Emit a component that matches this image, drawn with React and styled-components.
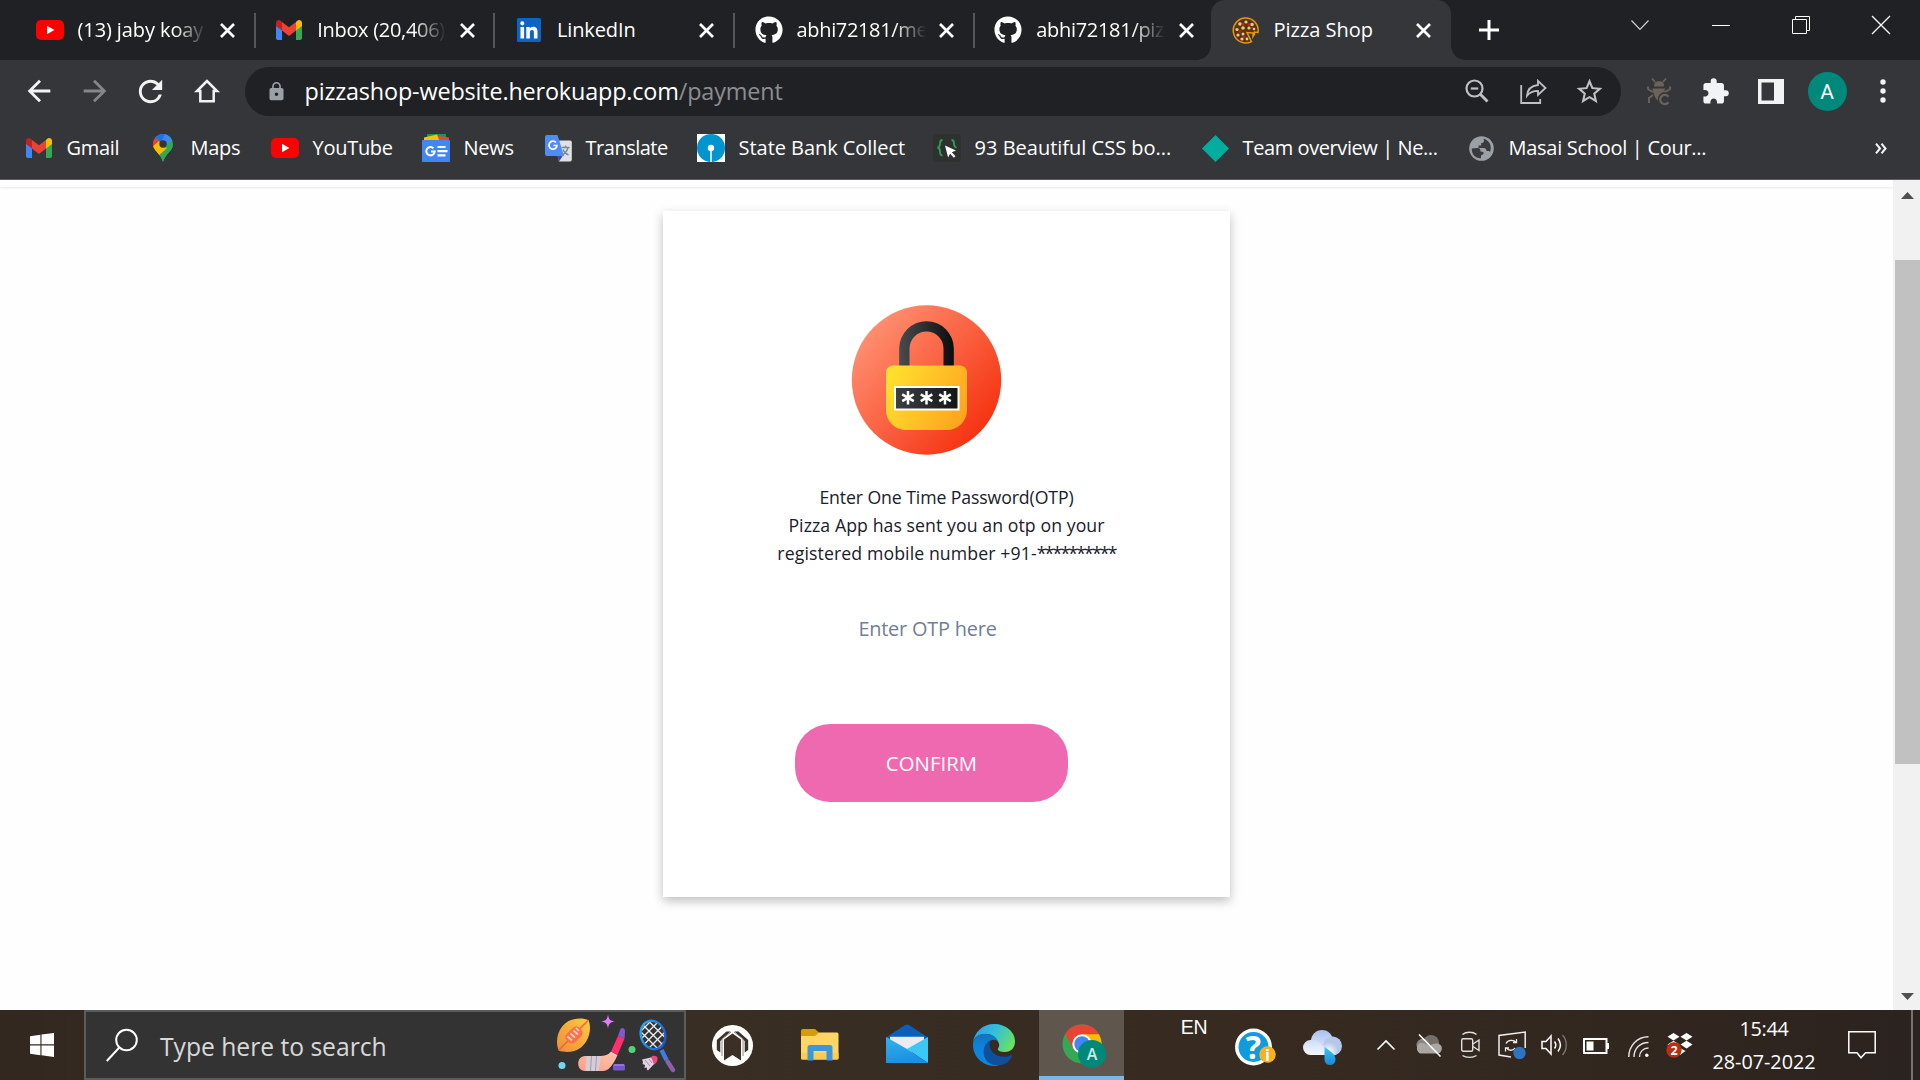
import React from "react";
import styled, { createGlobalStyle, css } from "styled-components";
import { FaGithub } from "react-icons/fa";
import { MdExtension, MdLock, MdStarBorder, MdArrowBack, MdArrowForward, MdRefresh } from "react-icons/md";

const Global = createGlobalStyle`
  *, *::before, *::after { box-sizing: border-box; }
  body { margin: 0; overflow: hidden; background: #fff; }
  svg { display: block; flex: none; overflow: visible; }
`;

const Screen = styled.div`
  width: 1920px;
  height: 1080px;
  display: flex;
  flex-direction: column;
  overflow: hidden;
  font-family: "Open Sans", "Noto Sans", sans-serif;
  color: #fff;
`;

/* ---------- Tab strip ---------- */
const TabStrip = styled.div`
  height: 60px;
  flex: none;
  display: flex;
  align-items: stretch;
  padding-left: 15px;
  background: #202124;
`;

const Tab = styled.div`
  position: relative;
  width: 239.7px;
  display: flex;
  align-items: center;
  padding-left: 20.5px;
  ${(p) =>
    p.$divider &&
    css`
      &::after {
        content: "";
        position: absolute;
        right: -1px;
        top: 13px;
        width: 2px;
        height: 35px;
        background: #54565a;
      }
    `}
  ${(p) =>
    p.$active &&
    css`
      width: 240px;
      margin-left: -2.5px;
      background: #35363a;
      border-radius: 14px 14px 0 0;
      &::before,
      &::after {
        content: "";
        position: absolute;
        bottom: 0;
        width: 14px;
        height: 14px;
      }
      &::before {
        left: -14px;
        background: radial-gradient(circle at 0 0, #202124 13.5px, #35363a 14px);
      }
      &::after {
        right: -14px;
        background: radial-gradient(circle at 100% 0, #202124 13.5px, #35363a 14px);
      }
    `}
`;

const TabIcon = styled.span`
  width: 28px;
  display: flex;
  justify-content: center;
`;

const TabTitle = styled.span`
  width: 129px;
  margin-left: 14px;
  font-size: 20px;
  line-height: 30px;
  letter-spacing: ${(p) => p.$track ?? -0.1}px;
  white-space: nowrap;
  overflow: hidden;
  ${(p) => p.$fade && css`mask-image: linear-gradient(90deg, #000 75%, transparent 100%);`}
`;

const TabClose = styled.button`
  margin-left: 14.5px;
  padding: 0;
  border: 0;
  background: none;
`;

const NewTab = styled.div`
  width: 76px;
  display: flex;
  align-items: center;
  justify-content: center;
`;

const WindowControls = styled.div`
  margin-left: auto;
  margin-right: -1px;
  height: 50px;
  display: flex;
`;

const Control = styled.div`
  width: 80.2px;
  display: flex;
  align-items: center;
  justify-content: center;
`;

/* ---------- Toolbar ---------- */
const Toolbar = styled.div`
  height: 63px;
  flex: none;
  display: flex;
  align-items: center;
  padding: 0 0 1px 10.5px;
  background: #35363a;
`;

const ToolCell = styled.div`
  width: 56px;
  height: 49px;
  display: flex;
  align-items: center;
  justify-content: center;
  flex: none;
  color: ${(p) => p.$color || "#f1f3f4"};
`;

const Omnibox = styled.div`
  width: 1376px;
  height: 49px;
  margin: 1px 10px 0 10.5px;
  padding: 0 4px 1px 21px;
  display: flex;
  align-items: center;
  border-radius: 25px;
  background: #202124;
  color: #9aa0a6;
`;

const Url = styled.div`
  flex: 1;
  margin-left: 17.5px;
  font-size: 23.4px;
  line-height: 34px;
  letter-spacing: -0.16px;
  color: #8b8d91;
  b {
    font-weight: 400;
    color: #fff;
  }
`;

const Avatar = styled.div`
  width: 39px;
  height: 39px;
  border-radius: 50%;
  background: #00897b;
  color: #fff;
  font: 21px/40px Roboto, sans-serif;
  text-align: center;
`;

const Bookmarks = styled.div`
  height: 57px;
  flex: none;
  display: flex;
  align-items: center;
  padding: 0 33px 6px 25px;
  background: #35363a;
  border-bottom: 1px solid #5f6063;
`;

const Bookmark = styled.div`
  width: ${(p) => p.$w}px;
  display: flex;
  align-items: center;
  gap: 13.6px;
  font-size: 20px;
  line-height: 30px;
  letter-spacing: ${(p) => p.$track ?? -0.3}px;
  white-space: nowrap;
`;

const BookmarkIcon = styled.span`
  width: 28px;
  height: 28px;
  flex: none;
  display: flex;
  align-items: center;
  justify-content: center;
`;

const Overflow = styled.div`
  margin-left: auto;
`;

/* ---------- Page ---------- */
const Viewport = styled.div`
  flex: 1;
  min-height: 0;
  display: flex;
  background: #fefefe;
`;

const Page = styled.main`
  flex: 1;
  display: flex;
  flex-direction: column;
  align-items: center;
`;

const HeaderEdge = styled.div`
  width: 100%;
  height: 7px;
  background: #fff;
  box-shadow: 0 1px 3px rgba(0, 0, 0, 0.09);
`;

const Card = styled.section`
  width: 567px;
  height: 686px;
  margin-top: 24px;
  padding-top: 94px;
  display: flex;
  flex-direction: column;
  background: #fff;
  box-shadow: 0 4px 10px rgba(0, 0, 0, 0.25);
`;

const LockPicture = styled.div`
  margin-left: 189px;
  height: 150px;
`;

const Message = styled.div`
  margin-top: 28px;
  display: flex;
  flex-direction: column;
  font-size: 17.7px;
  line-height: 28px;
  text-align: center;
  color: #1a202c;
`;

const Line = styled.span`
  letter-spacing: ${(p) => p.$track}px;
`;

const Masked = styled.span`
  letter-spacing: -1.85px;
`;

const OtpInput = styled.input`
  width: 266px;
  height: 50px;
  margin: 36px 0 0 131.5px;
  padding: 0;
  border: 0;
  background: transparent;
  font: 400 19.9px "Open Sans", "Noto Sans", sans-serif;
  letter-spacing: -0.2px;
  text-align: center;
  &::placeholder {
    color: #718096;
    opacity: 1;
  }
`;

const ConfirmButton = styled.button`
  width: 273px;
  height: 78px;
  margin: 71px 0 0 132px;
  padding: 0;
  border: 0;
  border-radius: 35px;
  background: #ef69b0;
  color: #fff;
  font: 400 20.3px "Open Sans", "Noto Sans", sans-serif;
  letter-spacing: 0.1px;
`;

const Scrollbar = styled.div`
  width: 27px;
  display: flex;
  flex-direction: column;
  align-items: center;
  padding: 12px 0 10px 1px;
  background: #f1f1f1;
`;

const Thumb = styled.div`
  width: 25px;
  height: 504px;
  margin: 61px 0 auto 1px;
  background: #c1c1c1;
`;

/* ---------- Taskbar ---------- */
const Taskbar = styled.footer`
  height: 70px;
  flex: none;
  display: flex;
  background: linear-gradient(90deg, #33281f, #392e23 35%, #372b21 62%, #32271f 85%, #2b2320);
`;

const StartButton = styled.div`
  width: 84px;
  display: flex;
  align-items: center;
  justify-content: center;
`;

const SearchBox = styled.div`
  width: 602px;
  display: flex;
  align-items: center;
  padding-left: 20px;
  border: 2px solid #5b5b5b;
  background: #333;
`;

const SearchText = styled.span`
  flex: 1;
  margin: 3px 0 0 22px;
  font-size: 24.7px;
  line-height: 34px;
  letter-spacing: -0.03px;
  color: #d8d8d8;
`;

const AppTile = styled.div`
  width: 87px;
  display: flex;
  align-items: center;
  justify-content: center;
  ${(p) => p.$first && css`margin-left: 3px;`}
  ${(p) =>
    p.$active &&
    css`
      width: 85px;
      margin-left: 2px;
      padding: 6px 0 0 4px;
      background: #5f574e;
      border-bottom: 4px solid #76b9ed;
    `}
`;

const TrayCell = styled.div`
  width: ${(p) => p.$w || 42}px;
  margin-left: ${(p) => p.$ml || 0}px;
  padding-top: ${(p) => p.$drop || 0}px;
  display: flex;
  align-items: center;
  justify-content: center;
`;

const Language = styled.div`
  width: 60px;
  margin-left: 40px;
  padding-top: 6px;
  font: 19.5px/22px "Liberation Sans", Arial, sans-serif;
  letter-spacing: -0.4px;
  text-align: center;
`;

const Clock = styled.div`
  width: 126px;
  display: flex;
  flex-direction: column;
  padding-top: 2px;
  font-size: 19.8px;
  line-height: 33px;
  text-align: center;
`;

const ClockLine = styled.span`
  letter-spacing: ${(p) => p.$track}px;
`;

const ShowDesktop = styled.div`
  width: 2px;
  margin-left: 14px;
  background: #77726d;
`;

/* ---------- Drawings ---------- */
const YouTube = () => (
  <svg width="28" height="20" viewBox="0 0 28 20">
    <rect width="28" height="20" rx="5" fill="#f00" />
    <path d="M11 5.8v8.4L18.4 10z" fill="#fff" />
  </svg>
);

const GmailMark = () => (
  <svg width="26" height="20" viewBox="0 0 26 20">
    <path d="M0 4v14.2A1.8 1.8 0 0 0 1.8 20H6V8.5z" fill="#4285f4" />
    <path d="M26 4v14.2a1.8 1.8 0 0 1-1.8 1.8H20V8.5z" fill="#34a853" />
    <path d="M6 2v8.6l7 5.3 7-5.3V2l-7 5.3z" fill="#ea4335" />
    <path d="M20 2v8.6l6-4.5V3c0-2.6-2.9-3.9-4.8-2.3z" fill="#fbbc04" />
    <path d="M0 6.1l6 4.5V2L4.8.8C2.9-.9 0 .4 0 3z" fill="#c5221f" />
  </svg>
);

const LinkedIn = () => (
  <svg width="24" height="24" viewBox="0 0 24 24">
    <rect width="24" height="24" rx="1.6" fill="#0a66c2" />
    <path d="M3.5 9h3.6v11.4H3.5zM5.3 3.3a2.05 2.05 0 1 1 0 4.1 2.05 2.05 0 0 1 0-4.1zM9.3 9h3.4v1.6c.5-1 1.7-1.9 3.5-1.9 3.6 0 4.3 2.4 4.3 5.5v6.2h-3.6v-5.5c0-1.3 0-3-1.8-3s-2.2 1.4-2.2 2.9v5.6H9.3z" fill="#fff" />
  </svg>
);

const Pizza = () => (
  <svg width="27" height="27" viewBox="0 0 27 27">
    <path d="M13.5 1A12.5 12.5 0 1 0 19.500 24.600L15 15.500l6 .5v3.500l1.500-2.500v-2l3.500.5A12.500 12.500 0 0 0 13.500 1z" fill="#5a3412" stroke="#e8960c" strokeWidth="1.500" />
    <g fill="#e6cf7c">
      <circle cx="8" cy="7" r="1.800" /><circle cx="14" cy="5" r="1.600" /><circle cx="20" cy="7.500" r="1.800" />
      <circle cx="5" cy="12.500" r="1.600" /><circle cx="11" cy="11" r="1.800" /><circle cx="17" cy="11" r="1.600" />
      <circle cx="22" cy="12" r="1.300" /><circle cx="6" cy="18" r="1.600" /><circle cx="11" cy="17" r="1.500" />
      <circle cx="10" cy="22" r="1.600" /><circle cx="15" cy="22" r="1.400" />
    </g>
    <g fill="#b5242c">
      <circle cx="11" cy="7.500" r="1.500" /><circle cx="17" cy="7.500" r="1.500" /><circle cx="8" cy="14.500" r="1.500" />
      <circle cx="12.500" cy="20" r="1.500" /><circle cx="20" cy="10.500" r="1.100" />
    </g>
  </svg>
);

const Cross = ({ size = 13, w = 2.7 }) => (
  <svg width={size} height={size} viewBox={`0 0 ${size} ${size}`}>
    <path d={`M0 0L${size} ${size}M${size} 0L0 ${size}`} stroke="#fff" strokeWidth={w} />
  </svg>
);

const House = () => (
  <svg width="24" height="24" viewBox="0 0 24 24">
    <path d="M12 2L2 12h3.300v10.300h13.400V12H22z" fill="none" stroke="#f1f3f4" strokeWidth="2.500" />
  </svg>
);

const ZoomOut = () => (
  <svg width="24" height="24" viewBox="0 0 24 24" fill="none" stroke="#bdc1c6" strokeWidth="2.200">
    <circle cx="9.500" cy="9.500" r="8" />
    <path d="M5.800 9.500h7.400" />
    <path d="M15.300 15.300l7.200 7.200" strokeWidth="2.900" />
  </svg>
);

const Share = () => (
  <svg width="27" height="25" viewBox="0 0 27 25" fill="none" stroke="#bdc1c6" strokeWidth="1.800">
    <path d="M1.200 6v18h19v-4" />
    <path d="M18 1.800l7.500 7.200L18 16v-4.200c-5.500 0-8.500 1.700-11 5C7.400 11 11 6.800 18 6z" />
  </svg>
);

const Bug = () => (
  <svg width="24" height="27" viewBox="0 0 24 27" fill="none" stroke="#6b625b" strokeWidth="1.900">
    <path d="M5 .500l3 3.500M19 .500L16 4M1 8.500v2.500l4 2.500h14l4-2.500V8.500M2 25v-5l4-3" />
    <path d="M8 7.500c0-4.500 8-4.500 8 0z" fill="#6b625b" />
    <path d="M5.500 10.500h13l-3.500 4.500-3.500 8c-3-2-4.500-5-6-12.500z" fill="#6b625b" stroke="none" />
    <path d="M21.500 18.500a4.700 4.700 0 1 0 0 5.500" stroke="#35363a" strokeWidth="4.500" />
    <path d="M21.500 18.700a4.600 4.600 0 1 0 0 5.500" strokeWidth="2.300" />
  </svg>
);

const SidePanel = () => (
  <svg width="26" height="25" viewBox="0 0 26 25">
    <path d="M0 0h26v25H0zM3.500 3.500v18H16v-18z" fill="#f1f3f4" fillRule="evenodd" />
  </svg>
);

const Dots = () => (
  <svg width="6" height="24" viewBox="0 0 6 24" fill="#f1f3f4">
    <circle cx="3" cy="3" r="2.700" /><circle cx="3" cy="12" r="2.700" /><circle cx="3" cy="21" r="2.700" />
  </svg>
);

const MapsPin = () => (
  <svg width="20" height="28" viewBox="0 0 20 28">
    <clipPath id="pin"><path d="M10 0A10 10 0 0 0 0 10c0 7 7.500 9 10 18 2.500-9 10-11 10-18A10 10 0 0 0 10 0z" /></clipPath>
    <g clipPath="url(#pin)">
      <rect width="20" height="28" fill="#34a853" />
      <path d="M0 16L16 0H0z" fill="#1a73e8" />
      <path d="M7 0h13v5L10 14z" fill="#4285f4" />
      <path d="M0 0h4l4 7-8 8z" fill="#ea4335" />
      <path d="M3 0h9L8 8 2.500 4z" fill="#1a73e8" />
      <path d="M-1 13l7-6 4 6 4 1L3 24z" fill="#fbbc04" />
      <path d="M20 4v8L5 28h15z" fill="#34a853" />
    </g>
    <circle cx="10" cy="10" r="3.700" fill="#35363a" />
  </svg>
);

const News = () => (
  <svg width="28" height="28" viewBox="0 0 28 28">
    <path d="M5 0h19v8H5z" fill="#0c9d58" />
    <path d="M15 1.500l12 2V8H14z" fill="#ea4335" />
    <path d="M2 3.500L15 .500 18 8H2z" fill="#ffc107" />
    <rect y="6" width="28" height="22" rx="1" fill="#4285f4" />
    <path d="M11.500 14.200a4.200 4.200 0 1 0 1.200 3.300H9" fill="none" stroke="#fff" strokeWidth="2" />
    <path d="M15.500 13h8M15.500 17.200h10M15.500 21.400h8" stroke="#fff" strokeWidth="2.200" />
  </svg>
);

const Translate = () => (
  <svg width="27" height="27" viewBox="0 0 27 27">
    <path d="M9 5.500h16a1.800 1.800 0 0 1 1.800 1.800v17.500a1.800 1.800 0 0 1-1.800 1.800H14z" fill="#dfe1e5" />
    <path d="M12 20.500h6l-4 6z" fill="#3949ab" />
    <path d="M2 0h10.500L19 21H2a2 2 0 0 1-2-2V2a2 2 0 0 1 2-2z" fill="#4e8df5" />
    <path d="M11 7.500A4 4 0 1 0 12 10.500H8.500" fill="none" stroke="#fff" strokeWidth="1.700" />
    <path d="M16.500 12.500h8M20.500 10.500v2M23 12.500c-.6 3-3 6-6 7.500M18 14.500c1 2.500 3 4.500 5.500 5.500" fill="none" stroke="#7c8a96" strokeWidth="1.400" />
  </svg>
);

const StateBank = () => (
  <svg width="28" height="28" viewBox="0 0 28 28">
    <rect width="28" height="28" fill="#fff" />
    <circle cx="14" cy="14" r="14" fill="#0095d0" />
    <circle cx="14" cy="14" r="3.200" fill="#fff" />
    <path d="M14 14v14" stroke="#fff" strokeWidth="1.500" />
  </svg>
);

const CssBraces = () => (
  <svg width="28" height="28" viewBox="0 0 28 28">
    <rect width="28" height="28" rx="4" fill="#2f3030" />
    <path d="M9.500 6C7 6 7 7.500 7 9.500s0 3.500-2.500 4c2.500.500 2.500 2 2.500 4s0 4 2.500 4M18.500 6c2.500 0 2.500 1.500 2.500 3.500s0 3.500 2.500 4" fill="none" stroke="#2f9e58" strokeWidth="1.800" />
    <path d="M12 11.500l11 5-4.200 1.700 3.700 4-1.700 1.600-3.700-4-2 3.700z" fill="#fff" />
  </svg>
);

const Diamond = () => (
  <svg width="27" height="27" viewBox="0 0 27 27">
    <path d="M13.500 0L27 13.500 13.500 27 0 13.500z" fill="#00ad9f" />
  </svg>
);

const Globe = () => (
  <svg width="25" height="25" viewBox="0 0 25 25">
    <circle cx="12.500" cy="12.500" r="12.300" fill="#9aa0a6" />
    <path d="M2.800 12.500l5.200-.500c3 0 3.500 1.500 3.500 3.500l3 .500v2l-2.500 1.500v2.800C6 22.500 2.500 18 2.800 12.500zM14.500 2.800L15 4.500c0 2-1 2.500-2.800 2.500v2.500H9.500v2.500h5c2.500 0 3 1.500 3 3h2.500l1 1c2-4.500.500-11.500-6.500-13.200z" fill="#3a3b3f" />
  </svg>
);

const Chevrons = () => (
  <svg width="12" height="11" viewBox="0 0 12 11" fill="none" stroke="#f1f3f4" strokeWidth="2.100">
    <path d="M1 .700l4 4.800-4 4.800M6.500.700l4 4.800-4 4.800" />
  </svg>
);

const Star = ({ x, y }) => (
  <path transform={`translate(${x} ${y})`} d="M0-6.800V6.800M-5.800-3.400L5.800 3.400M-5.800 3.400L5.800-3.400" stroke="#fff" strokeWidth="2.500" />
);

const OtpLock = () => (
  <svg width="150" height="150" viewBox="0 0 150 150">
    <defs>
      <linearGradient id="disc" x1="0.100" y1="0.150" x2="0.900" y2="0.850">
        <stop offset="0" stopColor="#ff9072" /><stop offset="1" stopColor="#f5310f" />
      </linearGradient>
      <linearGradient id="shackle"><stop offset="0" stopColor="#4a4b4d" /><stop offset="1" stopColor="#0c0d0f" /></linearGradient>
      <linearGradient id="body" x1="0" y1="0.300" x2="1" y2="0.700"><stop offset="0" stopColor="#ffdf2e" /><stop offset="1" stopColor="#fea41f" /></linearGradient>
      <linearGradient id="panel"><stop offset="0" stopColor="#3d3f42" /><stop offset="1" stopColor="#121416" /></linearGradient>
    </defs>
    <circle cx="74.500" cy="75" r="74.700" fill="url(#disc)" />
    <path d="M47.200 64V43.500a27.300 27.300 0 0 1 54.600 0V64H91.500V43.500a17 17 0 0 0-34 0V64z" fill="url(#shackle)" />
    <path d="M41 60.500h67a7 7 0 0 1 7 7v37.500a20 20 0 0 1-20 20H54a20 20 0 0 1-20-20V67.500a7 7 0 0 1 7-7z" fill="url(#body)" />
    <rect x="43" y="82" width="63.500" height="22.500" fill="url(#panel)" stroke="#fff" strokeWidth="2" />
    <Star x={56} y={92.800} /><Star x={74.500} y={92.800} /><Star x={93} y={92.800} />
  </svg>
);

const WindowsLogo = () => (
  <svg width="24" height="24" viewBox="0 0 24 24" fill="#fff">
    <path d="M0 3.300l10.400-1.500v9.500H0zM11.500 1.600L24 0v11.300H11.500zM0 12.400h10.400v9.800L0 20.700zM11.500 12.400H24V24l-12.500-1.700z" />
  </svg>
);

const Magnifier = () => (
  <svg width="32" height="34" viewBox="0 0 32 34" fill="none" stroke="#fff" strokeWidth="2">
    <circle cx="20.500" cy="12" r="10.300" />
    <path d="M13.300 19.500L.800 33" />
  </svg>
);

const Sports = () => (
  <svg width="128" height="66" viewBox="556 1012 128 66">
    <defs>
      <linearGradient id="ball" x1="0" y1="1" x2="1" y2="0"><stop offset="0" stopColor="#ef8b3a" /><stop offset=".7" stopColor="#fbb83c" /><stop offset="1" stopColor="#ffd23f" /></linearGradient>
      <linearGradient id="racket" x1="0" y1="0" x2="1" y2="1"><stop offset="0" stopColor="#2fb5f5" /><stop offset="1" stopColor="#1d48c4" /></linearGradient>
      <linearGradient id="stick" x1="0" y1="1" x2="1" y2="0"><stop offset="0" stopColor="#ff9e86" /><stop offset="1" stopColor="#ffc4ae" /></linearGradient>
      <clipPath id="strings"><ellipse cx="653" cy="1035" rx="12.500" ry="14" transform="rotate(-20 653 1035)" /></clipPath>
    </defs>
    <path d="M558.500 1050.500C554.500 1039 558.500 1027 568.500 1021c6-3 14-3.500 20-1 3.500 9 .500 21-7.500 27.500-6.500 5-15.500 5.500-22.500 3z" fill="url(#ball)" />
    <path d="M559 1050l29-29.500" stroke="#f0673f" strokeWidth="1.700" />
    <rect x="565" y="1029" width="18" height="12" rx="5" fill="#ff7043" transform="rotate(-44 574 1035)" />
    <path d="M567.500 1036.500l4.500 4M570.500 1033.500l4.500 4M573.500 1030.500l4.500 4M576 1028l3 3" stroke="#ffd2c4" strokeWidth="1.700" />
    <path d="M608 1014.500c.800 5 2 6.200 7 7-5 .800-6.200 2-7 7-.800-5-2-6.200-7-7 5-.800 6.200-2 7-7z" fill="#e07bff" />
    <path d="M611 1051.500l6.500 3.500c-2 5-5 10.500-9 14-2 1.500-4 2-7 2H585c-9 0-9-15 0-15h14c6 0 9-1 12-4.500z" fill="url(#stick)" />
    <path d="M586.500 1056h14.500l-2.500 15h-13z" fill="#d5cdd8" /><path d="M591.500 1056l-1 15M596.500 1056l-1 15" stroke="#a898a8" />
    <path d="M611 1051.500l6.500 3.500 7-16.500-6.500-2.500z" fill="#ff2f6d" />
    <path d="M618 1036l6.500 2.500 .500-6.500c.300-5-4-5-5-2z" fill="#8557cf" />
    <circle cx="632" cy="1049.600" r="3.500" fill="#4fd477" /><circle cx="562" cy="1065.400" r="3.500" fill="#6fd9ef" />
    <rect x="613" y="1064" width="12" height="6.500" rx="1.500" fill="#7657c9" /><path d="M614 1065h10" stroke="#9a7ce6" strokeWidth="1.600" />
    <g clipPath="url(#strings)" stroke="#e8eaf2" strokeWidth="1.300">
      <path d="M634 1025l30 30M639 1021l30 30M644.500 1017l30 30M629 1029l30 30M636 1036l24-24M638 1042l26-26M641.500 1047l26-26M645 1052l26-26M650 1056l22-22" />
    </g>
    <ellipse cx="653" cy="1035" rx="12" ry="14.500" transform="rotate(-20 653 1035)" fill="none" stroke="url(#racket)" strokeWidth="2.400" />
    <path d="M661.500 1050l5 10" stroke="#3f7ee0" strokeWidth="4.500" /><path d="M667.500 1061.500l5.500 8.500" stroke="#8a5fae" strokeWidth="4.500" strokeLinecap="round" />
    <path d="M642 1059.500l11-2.500 3 5-8 8.500c-1-1-1.500-1-1-3l-2.500.500.500-3-2.500-1 .500-2z" fill="#e2d3e4" /><path d="M645 1060l5 6M649 1059l3 4" stroke="#a98eae" />
    <path d="M651 1057c2-2 6-1.500 6.500 1 .300 3-1 5.500-3.500 6.500z" fill="#f0477c" />
  </svg>
);

const RoundMark = () => (
  <svg width="41" height="41" viewBox="0 0 41 41">
    <circle cx="20.500" cy="20.500" r="20.500" fill="#fff" />
    <g fill="#3a3026">
      <path d="M4.800 15L14.500 6.500h4L8.300 16v11.500L4.800 25z" />
      <path d="M36.200 15L26.500 6.500h-4L32.700 16v11.500L36.200 25z" />
      <path d="M12 35.500V14.500L20.500 8.500 29 14.500v21L20.500 30z" />
    </g>
    <path d="M10 31V13.800L19 7M31 31V13.800L22 7" fill="none" stroke="#8d8680" strokeWidth="1" />
  </svg>
);

const Folder = () => (
  <svg width="38" height="33" viewBox="0 0 38 33">
    <path d="M0 2a2 2 0 0 1 2-2h12l4 3.500V8H0z" fill="#d99a06" />
    <path d="M0 7h14l4-3.500h18a1.500 1.500 0 0 1 1.500 1.500V29a1.500 1.500 0 0 1-1.500 1.500H1.500A1.500 1.500 0 0 1 0 29z" fill="#ffd666" />
    <path d="M0 24h37.500v5a1.500 1.500 0 0 1-1.500 1.500H1.500A1.500 1.500 0 0 1 0 29z" fill="#fbcc4e" />
    <path d="M6.500 31.500V18.500a2.500 2.500 0 0 1 2.500-2.500h20a2.500 2.500 0 0 1 2.500 2.500v13H25.500V22h-13v9.500z" fill="#3a96dd" />
  </svg>
);

const Mail = () => (
  <svg width="42" height="42" viewBox="0 0 42 42">
    <defs>
      <linearGradient id="m1" x1="0" y1="0" x2="0.300" y2="1"><stop offset="0" stopColor="#2fb4f0" /><stop offset="1" stopColor="#1d8fe0" /></linearGradient>
    </defs>
    <path d="M0 13.500L19 1a4 4 0 0 1 4 0L42 13.500v4H0z" fill="#0a5fb8" />
    <path d="M4 12.700h34V20L21 32 4 20z" fill="#ececf0" />
    <path d="M42 13L21 25l21 14z" fill="#3cc8f5" />
    <path d="M0 13l21 12 21 14H0z" fill="url(#m1)" />
  </svg>
);

const Edge = () => (
  <svg width="42" height="42" viewBox="0 0 42 42">
    <defs>
      <linearGradient id="e1" x1="0" y1="0.200" x2="1" y2="0.600"><stop offset="0" stopColor="#2f9cf0" /><stop offset=".5" stopColor="#34c1d6" /><stop offset="1" stopColor="#6be15d" /></linearGradient>
      <linearGradient id="e2" x1="0.300" y1="0" x2="0.300" y2="1"><stop offset="0" stopColor="#1273b8" /><stop offset=".4" stopColor="#0b83dc" /><stop offset="1" stopColor="#1087df" /></linearGradient>
    </defs>
    <path d="M0 19C1 8 10 0 21 0c12 0 21 8 21 17 0 7-4 11-10 11-4.500 0-8-1.500-7-3.500 1.500-2 1.500-4 .500-6C23 13 18 10 12.500 10 6 10 1 13 0 19z" fill="url(#e1)" />
    <path d="M0 21c0-7 5-11.300 12.500-11.300 6 0 11.500 3.300 13 8.300-3-3.500-9-3-10.500 2-1.500 9 2 18 11 21.500C12 44 0 34 0 21z" fill="url(#e2)" />
    <path d="M17.500 16.500c-9 3.500-9 18-.500 23 9 4.500 18 .500 22-7 .500-1.300-.500-1.700-1.700-1-5 2.500-13 1.500-17.300-3-3-3-4.500-8-2.500-12z" fill="#0e4f9e" />
  </svg>
);

const ChromeProfile = () => (
  <svg width="44" height="44" viewBox="0 0 44 44">
    <circle cx="20" cy="20" r="19.500" fill="#34a853" />
    <path d="M20 20L3.100 10.250A19.500 19.500 0 0 1 36.900 10.250z" fill="#ea4335" />
    <path d="M20 10.250h16.900A19.500 19.500 0 0 1 20 39.500l8.400-14.700z" fill="#fbbc04" />
    <path d="M3.100 10.250L11.600 25 20 10.250z" fill="#ea4335" />
    <circle cx="20" cy="20" r="9.700" fill="#fff" /><circle cx="20" cy="20" r="7.700" fill="#4285f4" />
    <circle cx="30" cy="30" r="14" fill="#00897b" />
    <text x="30" y="36" fontSize="16" fontWeight="600" textAnchor="middle" fill="#c9ebe5">A</text>
  </svg>
);

const Help = () => (
  <svg width="41" height="38" viewBox="0 0 41 38">
    <circle cx="18.500" cy="19" r="18.500" fill="#fff" /><circle cx="18.500" cy="19" r="15" fill="#0f9be0" />
    <text x="18.500" y="30.500" fontSize="32" fontWeight="700" textAnchor="middle" fill="#fff">?</text>
    <circle cx="32.500" cy="26.500" r="8.300" fill="#f6b21b" />
    <text x="32.500" y="32.500" fontSize="16" fontWeight="700" textAnchor="middle" fill="#fff">i</text>
  </svg>
);

const Weather = () => (
  <svg width="40" height="35" viewBox="0 0 40 35">
    <defs>
      <linearGradient id="c1" x1="0" y1="0" x2="0" y2="1"><stop offset="0" stopColor="#a9c1f0" /><stop offset="1" stopColor="#e3ebfb" /></linearGradient>
      <radialGradient id="c2" cx=".3" cy=".8"><stop offset="0" stopColor="#fff" /><stop offset="1" stopColor="#b5c8ea" /></radialGradient>
      <linearGradient id="c3" x1="0" y1="0" x2="0" y2="1"><stop offset="0" stopColor="#cfdcf7" /><stop offset="1" stopColor="#f4f7fe" /></linearGradient>
      <linearGradient id="drop" x1="0" y1="0" x2="0" y2="1"><stop offset="0" stopColor="#3fc5f2" /><stop offset="1" stopColor="#158ad8" /></linearGradient>
    </defs>
    <circle cx="19" cy="11" r="11" fill="url(#c1)" />
    <circle cx="29.500" cy="16" r="9.500" fill="url(#c2)" />
    <path d="M7.500 10a7.500 7.500 0 0 0 0 15H24l-3-9c-2 1-4-4-7-5a10 10 0 0 0-6.500-1z" fill="url(#c3)" />
    <path d="M21.500 17c6 4 11 8 11 12.500a5.500 5.500 0 0 1-11 0z" fill="url(#drop)" />
  </svg>
);

const CloudOff = () => (
  <svg width="28" height="24" viewBox="0 0 28 24">
    <circle cx="17" cy="9" r="8" fill="#756f69" /><circle cx="9" cy="11" r="6.500" fill="#8a857f" />
    <path d="M6 9a6 6 0 0 0 0 10.500h17a5 5 0 0 0 2-9.500c-3-1-7 0-10 2-2-2-6-3.500-9-3z" fill="#aaa6a1" />
    <path d="M5 .500l21.500 22" stroke="#fff" strokeWidth="1.600" />
  </svg>
);

const MeetCam = () => (
  <svg width="19" height="26" viewBox="0 0 19 26" fill="none" stroke="#e2e0de" strokeWidth="1.400">
    <rect x=".700" y="6.700" width="11" height="12.500" rx="1.500" />
    <path d="M12 12l6-4v10.500l-6-4M1.500 2.500C5-.500 12-.500 15.500 2.500M1.500 23.500c3.500 2.500 10.500 2.500 14 0" />
  </svg>
);

const SyncIcon = () => (
  <svg width="28" height="28" viewBox="0 0 28 28" fill="none" stroke="#eee" strokeWidth="1.500">
    <path d="M13 26L1 24V4.500L27.200 1v16" />
    <path d="M8 12.500c2-4 8-4 10-1M18.500 8v3.500H15M17 17c-2 3-6.500 3-8.500 0M7.500 20.500V17H11" strokeWidth="1.300" />
    <circle cx="21.500" cy="22" r="6.200" fill="#2f74c0" stroke="none" />
  </svg>
);

const Speaker = () => (
  <svg width="27" height="22" viewBox="0 0 27 22" fill="none" stroke="#fff" strokeWidth="1.500">
    <path d="M1 7.500h4L10 2v18l-5-5.500H1zM13.500 7.500c1.500 2 1.500 5 0 7M17 4.500c3 4 3 9 0 13" />
    <path d="M21.500 1c5 5.500 5 14.500 0 20" stroke="#77716c" />
  </svg>
);

const Battery = () => (
  <svg width="26" height="16" viewBox="0 0 26 16">
    <path d="M1 1h22.500v14H1z" fill="none" stroke="#fff" strokeWidth="2" />
    <path d="M24 5h2v6h-2zM3.500 3.500h7v9h-7z" fill="#fff" />
  </svg>
);

const Wifi = () => (
  <svg width="21" height="21" viewBox="0 0 21 21" fill="none" stroke="#e6e4e2" strokeWidth="1.400">
    <path d="M.800 21C.800 10 9 .800 20.500.800M6 21C6 12.500 12 6.500 20.500 6.500M11.500 21c0-5 3.500-9 9-9" />
    <circle cx="18.800" cy="19.300" r="1.700" fill="#fff" stroke="none" />
  </svg>
);

const Dropbox = () => (
  <svg width="26" height="26" viewBox="0 0 26 26">
    <path d="M6.500 1l6 3.800-6 3.800-6-3.800zM19.500 1l6 3.800-6 3.800-6-3.800zM19.500 8.800l6 3.800-6 3.800-6-3.800zM6.500 8.800l6 3.800-6 3.800-6-3.800zM13 16l5.500 3-5.500 4z" fill="#fff" />
    <circle cx="7" cy="18" r="7.700" fill="#b92f14" />
    <text x="7" y="22.500" fontSize="12.500" fontWeight="700" textAnchor="middle" fill="#fff">2</text>
  </svg>
);

const Notification = () => (
  <svg width="28" height="28" viewBox="0 0 28 28" fill="none" stroke="#fff" strokeWidth="1.500">
    <path d="M.800.800h26.400v21H17.500l-4.500 5-4-5H.800z" />
  </svg>
);

const tabs = [
  { title: "(13) jaby koay", icon: <YouTube />, fade: true, divider: true },
  { title: "Inbox (20,406)", icon: <GmailMark />, fade: true, divider: true, track: -0.3 },
  { title: "LinkedIn", icon: <LinkedIn />, divider: true },
  { title: "abhi72181/me", icon: <FaGithub size={28} />, fade: true, divider: true, track: -0.35 },
  { title: "abhi72181/piz", icon: <FaGithub size={28} />, fade: true, track: -0.3 },
  { title: "Pizza Shop", icon: <Pizza />, active: true, track: 0 },
];

const bookmarks = [
  { name: "Gmail", icon: <GmailMark />, w: 124 },
  { name: "Maps", icon: <MapsPin />, w: 122 },
  { name: "YouTube", icon: <YouTube />, w: 151 },
  { name: "News", icon: <News />, w: 122 },
  { name: "Translate", icon: <Translate />, w: 153, track: -0.5 },
  { name: "State Bank Collect", icon: <StateBank />, w: 236, track: -0.05 },
  { name: "93 Beautiful CSS bo...", icon: <CssBraces />, w: 268, track: 0 },
  { name: "Team overview | Ne...", icon: <Diamond />, w: 266, track: -0.42 },
  { name: "Masai School | Cour...", icon: <Globe />, w: 260 },
];

export default function App() {
  return (
    <Screen>
      <Global />
      <TabStrip>
        {tabs.map((t, i) => (
          <Tab key={i} $active={t.active} $divider={t.divider}>
            <TabIcon>{t.icon}</TabIcon>
            <TabTitle $fade={t.fade} $track={t.track}>{t.title}</TabTitle>
            <TabClose aria-label="Close tab"><Cross /></TabClose>
          </Tab>
        ))}
        <NewTab>
          <svg width="20" height="20" viewBox="0 0 20 20"><path d="M10 0v20M0 10h20" stroke="#fff" strokeWidth="3" /></svg>
        </NewTab>
        <WindowControls>
          <Control><svg width="18" height="10" viewBox="0 0 18 10"><path d="M.500.500L9 9.300 17.500.500" fill="none" stroke="#cfd0d1" strokeWidth="1.200" /></svg></Control>
          <Control><svg width="18" height="1"><rect width="18" height="1" fill="#fff" /></svg></Control>
          <Control>
            <svg width="18" height="18" viewBox="0 0 18 18" fill="none" stroke="#fff"><path d="M.500 3.500h14v14H.500zM3.500 3.500v-3h14v14h-3" /></svg>
          </Control>
          <Control><Cross size={18} w={1.3} /></Control>
        </WindowControls>
      </TabStrip>

      <Toolbar>
        <ToolCell><MdArrowBack size={34} /></ToolCell>
        <ToolCell $color="#85868a"><MdArrowForward size={34} /></ToolCell>
        <ToolCell><MdRefresh size={35} /></ToolCell>
        <ToolCell><House /></ToolCell>
        <Omnibox>
          <MdLock size={21} />
          <Url><b>pizzashop-website.herokuapp.com</b>/payment</Url>
          <ToolCell><ZoomOut /></ToolCell>
          <ToolCell><Share /></ToolCell>
          <ToolCell $color="#bdc1c6"><MdStarBorder size={31} /></ToolCell>
        </Omnibox>
        <ToolCell><Bug /></ToolCell>
        <ToolCell><MdExtension size={29} /></ToolCell>
        <ToolCell><SidePanel /></ToolCell>
        <ToolCell><Avatar>A</Avatar></ToolCell>
        <ToolCell><Dots /></ToolCell>
      </Toolbar>

      <Bookmarks>
        {bookmarks.map((b) => (
          <Bookmark key={b.name} $w={b.w} $track={b.track}>
            <BookmarkIcon>{b.icon}</BookmarkIcon>
            {b.name}
          </Bookmark>
        ))}
        <Overflow><Chevrons /></Overflow>
      </Bookmarks>

      <Viewport>
        <Page>
          <HeaderEdge />
          <Card>
            <LockPicture><OtpLock /></LockPicture>
            <Message>
              <Line $track={-0.11}>Enter One Time Password(OTP)</Line>
              <Line $track={0.07}>Pizza App has sent you an otp on your</Line>
              <Line $track={0.1}>
                registered mobile number +91-<Masked>**********</Masked>
              </Line>
            </Message>
            <OtpInput placeholder="Enter OTP here" />
            <ConfirmButton>CONFIRM</ConfirmButton>
          </Card>
        </Page>
        <Scrollbar>
          <svg width="13" height="7"><path d="M6.500 0L13 7H0z" fill="#505050" /></svg>
          <Thumb />
          <svg width="13" height="7"><path d="M0 0h13L6.500 7z" fill="#505050" /></svg>
        </Scrollbar>
      </Viewport>

      <Taskbar>
        <StartButton><WindowsLogo /></StartButton>
        <SearchBox>
          <Magnifier />
          <SearchText>Type here to search</SearchText>
          <Sports />
        </SearchBox>
        <AppTile $first><RoundMark /></AppTile>
        <AppTile><Folder /></AppTile>
        <AppTile><Mail /></AppTile>
        <AppTile><Edge /></AppTile>
        <AppTile $active><ChromeProfile /></AppTile>
        <Language>EN</Language>
        <TrayCell $w={62} $drop={4}><Help /></TrayCell>
        <TrayCell $w={74} $drop={4}><Weather /></TrayCell>
        <TrayCell $ml={5}>
          <svg width="18" height="10" viewBox="0 0 18 10"><path d="M.500 9.500L9 1l8.500 8.500" fill="none" stroke="#fff" strokeWidth="1.600" /></svg>
        </TrayCell>
        <TrayCell $drop={2}><CloudOff /></TrayCell>
        <TrayCell><MeetCam /></TrayCell>
        <TrayCell><SyncIcon /></TrayCell>
        <TrayCell><Speaker /></TrayCell>
        <TrayCell $drop={2}><Battery /></TrayCell>
        <TrayCell $drop={3}><Wifi /></TrayCell>
        <TrayCell><Dropbox /></TrayCell>
        <Clock>
          <ClockLine $track={-0.3}>15:44</ClockLine>
          <ClockLine $track={0}>28-07-2022</ClockLine>
        </Clock>
        <TrayCell $w={70}><Notification /></TrayCell>
        <ShowDesktop />
      </Taskbar>
    </Screen>
  );
}
